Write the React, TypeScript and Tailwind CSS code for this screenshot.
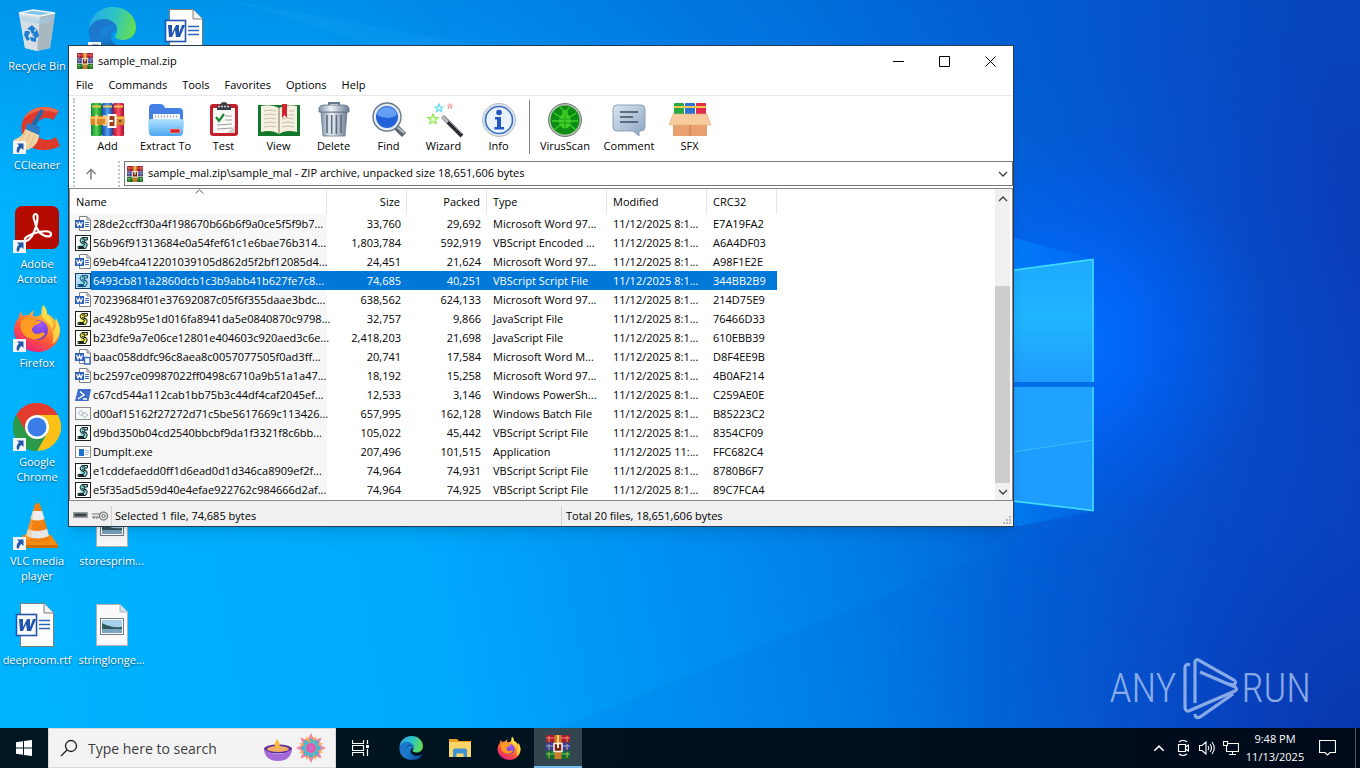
import React from "react";

const UI = "font-['Open_Sans','Noto_Sans',sans-serif]";

/* ---------- wallpaper ---------- */

function Wallpaper() {
  return (
    <svg className="absolute inset-0 h-full w-full" viewBox="0 0 1360 728" preserveAspectRatio="xMidYMid slice" aria-hidden="true">
      <defs>
        <linearGradient id="wpBase" x1="0" y1="500" x2="1360" y2="250" gradientUnits="userSpaceOnUse">
          <stop offset="0" stopColor="#00b3ff" />
          <stop offset="0.28" stopColor="#00aafc" />
          <stop offset="0.5" stopColor="#008cf0" />
          <stop offset="0.68" stopColor="#0070e0" />
          <stop offset="0.85" stopColor="#0553d2" />
          <stop offset="1" stopColor="#0a3eb8" />
        </linearGradient>
        <linearGradient id="wpTop" x1="0" y1="0" x2="0" y2="200" gradientUnits="userSpaceOnUse">
          <stop offset="0" stopColor="#0058c0" stopOpacity="0.3" />
          <stop offset="1" stopColor="#0058c0" stopOpacity="0" />
        </linearGradient>
        <radialGradient id="wpGlow" cx="1070" cy="340" r="200" gradientUnits="userSpaceOnUse">
          <stop offset="0" stopColor="#0070ff" />
          <stop offset="0.35" stopColor="#0068ff" stopOpacity="0.75" />
          <stop offset="1" stopColor="#0060f0" stopOpacity="0" />
        </radialGradient>
        <radialGradient id="wpCorner" cx="1360" cy="728" r="480" gradientUnits="userSpaceOnUse">
          <stop offset="0" stopColor="#0836ac" />
          <stop offset="0.4" stopColor="#0840bc" stopOpacity="0.6" />
          <stop offset="1" stopColor="#0848c8" stopOpacity="0" />
        </radialGradient>
        <linearGradient id="paneA" x1="0" y1="260" x2="0" y2="382" gradientUnits="userSpaceOnUse">
          <stop offset="0" stopColor="#1eaaff" />
          <stop offset="0.5" stopColor="#20b4ff" />
          <stop offset="1" stopColor="#1e9cff" />
        </linearGradient>
        <linearGradient id="beam" x1="1093" y1="0" x2="1000" y2="0" gradientUnits="userSpaceOnUse">
          <stop offset="0" stopColor="#0080ff" stopOpacity="0.2" />
          <stop offset="1" stopColor="#0090ff" stopOpacity="0.6" />
        </linearGradient>
      </defs>
      <rect width="1360" height="728" fill="url(#wpBase)" />
      <rect width="1360" height="200" fill="url(#wpTop)" />
      <rect width="1360" height="728" fill="url(#wpCorner)" />
      <path d="M230 0 420 60H560Z" fill="#30b8ff" opacity="0.12" />
      <rect x="800" y="100" width="560" height="560" fill="url(#wpGlow)" />
      <path d="M1093 259 1000 234V275ZM1093 511 1000 498V526H1020Z" fill="url(#beam)" />
      <path d="M1093 511 560 728H1000L1180 560Z" fill="#005cd8" opacity="0.1" />
      <path d="M1000 272 1093 259V382H1000Z" fill="url(#paneA)" />
      <path d="M1000 387H1093V511L1000 500Z" fill="#1e9cff" />
      <path d="M1000 387H1093V440L1000 454Z" fill="#20a8ff" opacity="0.6" />
      <path d="M1000 382H1093V387H1000Z" fill="#0070e8" />
      <path d="M1000 272 1093 259.500V382M1093 387V510.500L1000 499.500" fill="none" stroke="#3fdcff" strokeWidth="1.600" />
      <path d="M1000 454 1093 440" stroke="#34c0ff" strokeWidth="1" />
    </svg>
  );
}

/* ---------- application icons ---------- */

function EdgeIcon({ className }: { className: string }) {
  return (
    <svg className={className} viewBox="0 0 48 48" aria-hidden="true">
      <defs>
        <linearGradient id="edgeTop" x1="0" y1="0.3" x2="1" y2="0.5">
          <stop offset="0" stopColor="#28a8e8" />
          <stop offset="0.5" stopColor="#2cc4c8" />
          <stop offset="1" stopColor="#66dd50" />
        </linearGradient>
        <linearGradient id="edgeLow" x1="0" y1="0" x2="1" y2="1">
          <stop offset="0" stopColor="#1b8fe0" />
          <stop offset="1" stopColor="#0c4a9c" />
        </linearGradient>
      </defs>
      <path d="M1 22C2 8 13 0 25 0c14 0 23 10 23 20 0 8-6 13-13 13-5 0-8-2-8-4 0-1 2-2 2-6 0-6-6-10-13-10C9 13 3 17 1 22Z" fill="url(#edgeTop)" />
      <path d="M1 22C3 16 9 12 16 12c7 0 13 4 13 11-2-4-6-6-10-4-5 3-7 9-5 15 2 7 8 11 14 13C12 50-1 38 1 22Z" fill="#1b78cc" />
      <path d="M29 23c-2-4-7-5-10-3-5 3-8 10-5 17 4 9 14 12 22 10 4-2 7-5 9-8 1-1 0-2-2-1-8 4-19 1-20-8 0-3 2-5 4-6Z" fill="url(#edgeLow)" />
    </svg>
  );
}

function FirefoxIcon({ className }: { className: string }) {
  return (
    <svg className={className} viewBox="0 0 48 48" aria-hidden="true">
      <defs>
        <linearGradient id="ffBody" x1="0.8" y1="0" x2="0.2" y2="1">
          <stop offset="0" stopColor="#fff44f" />
          <stop offset="0.3" stopColor="#ffa833" />
          <stop offset="0.6" stopColor="#ff5a36" />
          <stop offset="1" stopColor="#e31587" />
        </linearGradient>
        <radialGradient id="ffGlobe" cx="0.6" cy="0.2" r="0.9">
          <stop offset="0" stopColor="#a05cff" />
          <stop offset="1" stopColor="#5b2fc4" />
        </radialGradient>
      </defs>
      <path d="M30 1c3 3 4 6 4 9 4 1 7 5 8 7 1-1 1-2 0-4 4 5 5 10 5 14 0 12-10 21-22 21S2 39 1 27c0-7 3-11 5-14 0-2 1-4 2-6 0 2 1 4 2 5 2-1 4-1 6-1 2-3 4-4 6-5-2 2-2 4-2 6 4 1 7 0 9-3 2-2 2-5 1-8Z" fill="url(#ffBody)" />
      <circle cx="25" cy="26" r="10" fill="url(#ffGlobe)" />
      <path d="M8 17c5-5 11-4 13-1 2 1 5 1 7 1 0 2-4 4-6 4-1 2-3 2-3 5 1 4 5 5 9 3 2-1 4 0 4 1-3 5-10 7-16 4-6-2-10-9-8-17Z" fill="#ff9a22" />
      <path d="M30 1c3 3 4 6 4 9 6 5 7 12 5 18 5-3 5-10 3-14 3 4 5 9 5 13-1 5-3 10-8 13 3-8 1-17-5-22-6-5-7-11-4-17Z" fill="#ffe24a" opacity="0.85" />
    </svg>
  );
}

function ChromeIcon({ className }: { className: string }) {
  return (
    <svg className={className} viewBox="0 0 48 48" aria-hidden="true">
      <path d="M24 24 3.200 12A24 24 0 0 1 44.800 12Z" fill="#ea4335" />
      <path d="M3.200 12A24 24 0 0 0 24 48L34.400 30 24 24Z" fill="#34a853" />
      <path d="M44.800 12A24 24 0 0 1 24 48L34.400 30 24 12Z" fill="#fbc116" />
      <path d="M3.200 12 13.600 30 24 12H44.800A24 24 0 0 0 3.200 12Z" fill="#e33b2e" />
      <path d="M3.200 12 13.600 30A12 12 0 0 0 34 30L24 48A24 24 0 0 1 3.200 12Z" fill="#2a9a48" />
      <circle cx="24" cy="24" r="12" fill="#fff" />
      <circle cx="24" cy="24" r="9.500" fill="#3a7de8" />
    </svg>
  );
}

function RecycleIcon() {
  return (
    <svg className="h-12 w-12" viewBox="0 0 48 48" aria-hidden="true">
      <path d="M6 6 20 3 42 6 37 41 24 44 12 41Z" fill="#d5dde3" />
      <path d="M6 6 27 9 24 44 12 41Z" fill="#d8dfe4" />
      <path d="M27 9 42 6 37 41 24 44Z" fill="#a9b7c0" />
      <path d="M6 6 20 3 42 6 27 9Z" fill="#82c2e8" stroke="#eef4f7" strokeWidth="1.500" />
      <path d="M8 9 27 12 40 9 39 14 27 17 9 14Z" fill="#9fd0ec" opacity="0.5" />
      <path d="M14 22l5-4 4 4-2 1 1 3-3 1-2-4ZM24 22l2 7-4 3-1-3-2 0 3-4ZM12 24l4 0 1 2-2 3 2 3-3 2-3-6ZM17 30l6 1 0 4-5-1Z" fill="#1c7fd4" />
    </svg>
  );
}

function CCleanerIcon() {
  return (
    <svg className="h-12 w-12" viewBox="0 0 48 48" aria-hidden="true">
      <path d="M46 5C34-2 16 0 10 14c-4 10 0 24 10 28 9 4 20 2 27-2l-4-9c-6 4-14 4-18-1-4-5-3-13 2-16 5-3 10-2 13 0Z" fill="#dd3a2c" />
      <path d="M46 5C34-2 16 0 10 14c8-9 20-12 33-7Z" fill="#f06a4c" />
      <path d="M28 3 31 5 22 21 18 18Z" fill="#2468ac" />
      <path d="M14 17 27 21 26 30 12 25Z" fill="#2d7cc4" />
      <path d="M12 23 26 29C26 38 18 43 14 44L0 34C6 32 11 29 12 23Z" fill="#f1d5a4" />
      <path d="M13 26 6 36M17 28 11 40M22 29 16 42" stroke="#dfbb84" strokeWidth="1" />
    </svg>
  );
}

function AcrobatIcon() {
  return (
    <svg className="h-12 w-12" viewBox="0 0 48 48" aria-hidden="true">
      <rect x="2" y="1" width="44" height="43" rx="7" fill="#b30b00" />
      <path d="M23 9c-3 0-3 4-1 8 1 5 4 11 8 13 4 2 8 2 8-1 0-4-9-3-16-1-6 2-11 5-10 7 2 3 7-3 9-8 3-6 5-18 2-18Z" fill="none" stroke="#fff" strokeWidth="2.200" />
    </svg>
  );
}

function VlcIcon() {
  return (
    <svg className="h-12 w-12" viewBox="0 0 48 48" aria-hidden="true">
      <path d="M10 33H38L45 43V46H4V43Z" fill="#f28a10" />
      <path d="M4 43H45V46H4Z" fill="#d06c00" />
      <path d="M22 2Q24.500 0 27 2L37 37Q24.500 43 12 37Z" fill="#f08010" />
      <path d="M19.800 9H29.200L31.500 17Q24.500 20 17.500 17Z" fill="#ededed" />
      <path d="M15 27Q24.500 31 34 27L36 34Q24.500 39 13 34Z" fill="#e6e6e6" />
      <path d="M22 2Q19 20 18 38L12 37Z" fill="#ffb45a" opacity="0.4" />
    </svg>
  );
}

function WordDocIcon() {
  return (
    <svg className="h-12 w-12" viewBox="0 0 48 48" aria-hidden="true">
      <path d="M7.500 2.500H31L40.500 12V45.500H7.500Z" fill="#fff" stroke="#7c7c7c" />
      <path d="M31 2.500V12H40.500" fill="#f0f0f0" stroke="#7c7c7c" />
      <path d="M26 19.500H37M26 23.500H37M26 27.500H37" stroke="#2a64b8" strokeWidth="1.300" />
      <rect x="3.500" y="13.500" width="20" height="21" fill="#fff" stroke="#2055b0" strokeWidth="1.600" />
      <path d="M6 18h4l0 8 4-8h3l0 8 3-8h3l-5 12h-4l-1-7-3 7H7Z" fill="#2055b0" />
    </svg>
  );
}

function PictureDocIcon() {
  return (
    <svg className="h-12 w-12" viewBox="0 0 48 48" aria-hidden="true">
      <path d="M8.500 3.500H32L39.500 11V44.500H8.500Z" fill="#fafafa" stroke="#a8b2b8" />
      <path d="M32 3.500V11H39.500" fill="#cfe2ee" stroke="#a8b2b8" />
      <rect x="12.500" y="17.500" width="23" height="16" fill="#fff" stroke="#6c7c88" />
      <rect x="14" y="19" width="20" height="13" fill="#a6d0f0" />
      <path d="M14 22Q22 27 34 26V29H14Z" fill="#31585e" />
      <path d="M14 28H34V32H14Z" fill="#7aa4c0" />
    </svg>
  );
}

function ShortcutBadge() {
  return (
    <svg className="absolute bottom-0 left-0 h-[13px] w-[13px]" viewBox="0 0 13 13" aria-hidden="true">
      <rect width="13" height="13" fill="#f4f4f4" />
      <path d="M4 2.500H10.500V9L8.500 7C7 8 6 9 6 11.500H4C3 8 4.500 6 6 4.500Z" fill="#1f5aa8" />
    </svg>
  );
}

/* Stacked books tied with a belt; used at 16px and 24px. */
function RarIcon({ className }: { className: string }) {
  return (
    <svg className={className} viewBox="0 0 24 24" aria-hidden="true">
      <rect x="0" y="0" width="24" height="7.500" rx="1" fill="#a81c34" />
      <rect x="0" y="2" width="24" height="2" fill="#dc4858" />
      <rect x="0" y="8" width="24" height="7.500" rx="1" fill="#34409c" />
      <rect x="0" y="10" width="24" height="2" fill="#5c78d0" />
      <rect x="0" y="16" width="24" height="8" rx="1" fill="#10702c" />
      <rect x="0" y="18" width="24" height="2" fill="#38a44c" />
      <path d="M3 1V7M3 9V15M3 17V23M21 1V7M21 9V15M21 17V23" stroke="#d8a850" strokeWidth="1" />
      <rect x="8.500" y="0" width="7" height="24" fill="#cc7c28" />
      <path d="M12 0V8" stroke="#ffc868" strokeWidth="2" />
      <rect x="8" y="8.500" width="8" height="8" fill="#7a2010" stroke="#f4ead8" strokeWidth="1.600" />
      <path d="M12 8V13" stroke="#fff" strokeWidth="1.800" />
    </svg>
  );
}

/* ---------- toolbar icons ---------- */

const svgBox = "h-9 w-[46px]";

function AddIcon() {
  return (
    <svg className={svgBox} viewBox="0 0 46 36" aria-hidden="true">
      <defs>
        <linearGradient id="bookG" x1="0" x2="1"><stop offset="0" stopColor="#0c8a30" /><stop offset="0.5" stopColor="#52d050" /><stop offset="1" stopColor="#0c7a28" /></linearGradient>
        <linearGradient id="bookB" x1="0" x2="1"><stop offset="0" stopColor="#1848b0" /><stop offset="0.5" stopColor="#50a0f0" /><stop offset="1" stopColor="#1c3c98" /></linearGradient>
        <linearGradient id="bookR" x1="0" x2="1"><stop offset="0" stopColor="#b01038" /><stop offset="0.5" stopColor="#ff5068" /><stop offset="1" stopColor="#a80c30" /></linearGradient>
      </defs>
      <rect x="6" y="1" width="11" height="33" rx="1.500" fill="url(#bookG)" />
      <rect x="17" y="1" width="11" height="33" rx="1.500" fill="url(#bookB)" />
      <rect x="28" y="1" width="11" height="33" rx="1.500" fill="url(#bookR)" />
      <path d="M7 4.500H16M18 4.500H27M29 4.500H38" stroke="#f2c84c" strokeWidth="2" />
      <rect x="5.500" y="14" width="34" height="9" rx="1" fill="#d8882a" />
      <path d="M6 16H39" stroke="#ffc860" strokeWidth="1.500" />
      <path d="M13 14H11V23H13M18 14H21V23H18" stroke="#ffe0a0" strokeWidth="1.500" fill="none" />
      <rect x="23.500" y="13" width="7" height="12" fill="#a83c18" stroke="#fff" strokeWidth="2" />
      <path d="M23 19H28" stroke="#fff" strokeWidth="2" />
      <circle cx="35" cy="19" r="1.200" fill="#703808" />
    </svg>
  );
}

function ExtractIcon() {
  return (
    <svg className={svgBox} viewBox="0 0 46 36" aria-hidden="true">
      <defs>
        <linearGradient id="foldF" x1="0" y1="0" x2="0" y2="1"><stop offset="0" stopColor="#b4e4ff" /><stop offset="1" stopColor="#4ca8f0" /></linearGradient>
      </defs>
      <path d="M6 6Q6 2 10 2H17Q21 2 22 6H36Q40 6 40 10V26H6Z" fill="#4480e4" />
      <path d="M10 12H37V24H10Z" fill="#f4f6f8" />
      <path d="M12 14.500H36" stroke="#9aa4ae" strokeWidth="2" strokeDasharray="1 2" />
      <path d="M5 20Q5 17 9 17H37Q41 17 41 20L40 31Q40 34 36 34H10Q6 34 6 31Z" fill="url(#foldF)" />
      <rect x="27" y="27" width="10" height="4" rx="1" fill="#d8282c" stroke="#f8b0b0" strokeWidth="0.600" />
    </svg>
  );
}

function TestIcon() {
  return (
    <svg className={svgBox} viewBox="0 0 46 36" aria-hidden="true">
      <rect x="9" y="2" width="28" height="32" rx="3" fill="#c4202c" />
      <path d="M12 6H34V31H12Z" fill="#f8f8f6" />
      <path d="M16 3H19Q20 0 23 0T27 3H30V8H16Z" fill="#3c4044" />
      <path d="M17 4.500H29" stroke="#d0d4d8" strokeWidth="1.500" strokeDasharray="2 1" />
      <path d="M15 15L18 19 23 12" stroke="#1c8a38" strokeWidth="2.200" fill="none" />
      <path d="M24 14H31M24 18H31M16 23L31 22M16 27L31 26" stroke="#a0a0a0" strokeWidth="1" />
      <path d="M34 24V31H26Z" fill="#d4d0cc" />
    </svg>
  );
}

function ViewIcon() {
  return (
    <svg className={svgBox} viewBox="0 0 46 36" aria-hidden="true">
      <path d="M2 3H44V34H2Z" fill="#14782c" />
      <path d="M5 4Q16 2 23 6Q30 2 41 4V30Q30 27 23 32Q16 27 5 30Z" fill="#f6f0e0" />
      <path d="M23 6V32" stroke="#a89c80" strokeWidth="1.500" />
      <path d="M8 9Q14 7 20 9M8 13Q14 11 20 13M8 17Q14 15 20 17M8 21Q14 19 20 21M8 25Q14 23 20 25M26 17Q32 15 38 17M26 21Q32 19 38 21M26 25Q32 23 38 25M33 13H38M33 9H38" stroke="#c4beb0" strokeWidth="1" fill="none" />
      <path d="M26 2H31V16L28.500 13 26 16Z" fill="#d42430" />
    </svg>
  );
}

function DeleteIcon() {
  return (
    <svg className={svgBox} viewBox="0 0 46 36" aria-hidden="true">
      <defs>
        <linearGradient id="bin" x1="0" x2="1"><stop offset="0" stopColor="#8494a6" /><stop offset="0.4" stopColor="#eef3f8" /><stop offset="1" stopColor="#6c7c90" /></linearGradient>
      </defs>
      <path d="M18 3V1H28V3" stroke="#64748a" strokeWidth="1.800" fill="none" />
      <path d="M10 10H36L34 34H12Z" fill="url(#bin)" stroke="#6a7a8c" strokeWidth="0.800" />
      <path d="M16 13V31M20.700 13V32M25.400 13V32M30 13V31" stroke="#5a6a80" strokeWidth="1.600" />
      <path d="M8 6Q9 3 13 3H33Q37 3 38 6V10H8Z" fill="url(#bin)" stroke="#5a6a7c" strokeWidth="0.800" />
    </svg>
  );
}

function FindIcon() {
  return (
    <svg className={svgBox} viewBox="0 0 46 36" aria-hidden="true">
      <path d="M30 25 38 33" stroke="#5c6470" strokeWidth="6" />
      <path d="M31 25 38 31" stroke="#b4bcc6" strokeWidth="2" />
      <circle cx="21" cy="15" r="14" fill="#e4eaf0" stroke="#68788c" strokeWidth="1.400" />
      <circle cx="21" cy="15" r="11" fill="#2262d8" />
      <path d="M11 13Q13 5 21 5T31 13Q22 19 11 13Z" fill="#78b4ff" opacity="0.75" />
    </svg>
  );
}

const star = "M0-5 1.500-1.600 5-1.300 2.400 1 3.200 4.500 0 2.700-3.200 4.500-2.400 1-5-1.300-1.500-1.600Z";

function WizardIcon() {
  return (
    <svg className={svgBox} viewBox="0 0 46 36" aria-hidden="true">
      <path d="M22 15 41 34" stroke="#2c2c30" strokeWidth="4" />
      <path d="M21 14 27 20" stroke="#b8bcc2" strokeWidth="4" />
      <path d="M23 14 41 32" stroke="#8c9098" strokeWidth="1" />
      <path d={star} transform="translate(12 17)" fill="#e4ffc8" stroke="#90e850" strokeWidth="1.200" />
      <path d={star} transform="translate(18 6) scale(0.800)" fill="#d4f8ff" stroke="#64d8f0" strokeWidth="1.400" />
      <path d={star} transform="translate(29 4) scale(0.500)" fill="#ffe4e8" stroke="#f0909c" strokeWidth="1.800" />
    </svg>
  );
}

function InfoIcon() {
  return (
    <svg className={svgBox} viewBox="0 0 46 36" aria-hidden="true">
      <circle cx="23" cy="18" r="16.500" fill="#dfe4ea" stroke="#a8b0ba" strokeWidth="0.800" />
      <circle cx="23" cy="18" r="13.500" fill="#eaf2fc" stroke="#3c70c4" strokeWidth="1.600" />
      <circle cx="23" cy="10.500" r="2.800" fill="#2458c0" />
      <path d="M19 15H25V25H28V27.500H18.500V25H21V17.500H19Z" fill="#2458c0" />
    </svg>
  );
}

function VirusIcon() {
  return (
    <svg className={svgBox} viewBox="0 0 46 36" aria-hidden="true">
      <circle cx="23" cy="18" r="16.500" fill="#b8c0b4" stroke="#506050" strokeWidth="0.800" />
      <circle cx="23" cy="18" r="14.500" fill="#0c8c14" />
      <ellipse cx="23" cy="19" rx="6" ry="7.500" fill="#40d028" />
      <circle cx="23" cy="10.500" r="3" fill="#38c422" />
      <path d="M18 15 12 11M17 19H10M18 23 12 28M28 15 34 11M29 19H36M28 23 34 28M21 8 18 5M25 8 28 5" stroke="#40d028" strokeWidth="1.300" />
      <path d="M23 13V26M18 17H28M18 21H28" stroke="#1c9c18" strokeWidth="0.900" />
    </svg>
  );
}

function CommentIcon() {
  return (
    <svg className={svgBox} viewBox="0 0 46 36" aria-hidden="true">
      <defs>
        <linearGradient id="bub" x1="0" y1="0" x2="1" y2="1"><stop offset="0" stopColor="#dae6f2" /><stop offset="1" stopColor="#8ca4c0" /></linearGradient>
      </defs>
      <path d="M11 3H35Q39 3 39 7V25Q39 29 35 29H33V34L27 29H11Q7 29 7 25V7Q7 3 11 3Z" fill="url(#bub)" stroke="#8ca0b8" />
      <path d="M14 10H32M14 15H27M14 20H32" stroke="#3c4c60" strokeWidth="1.600" />
    </svg>
  );
}

function SfxIcon() {
  return (
    <svg className={svgBox} viewBox="0 0 46 36" aria-hidden="true">
      <rect x="7" y="1" width="10" height="14" rx="1" fill="#28a844" />
      <rect x="18" y="1" width="10" height="14" rx="1" fill="#2c74d4" />
      <rect x="29" y="1" width="10" height="14" rx="1" fill="#e02c4c" />
      <path d="M7 5H39" stroke="#f2c84c" strokeWidth="2" />
      <path d="M6 17H40V34H6Z" fill="#e8a070" />
      <path d="M6 12H40L44 23H2Z" fill="#f8cc9c" stroke="#e0b084" strokeWidth="0.600" />
      <path d="M23 23V34" stroke="#c87c50" />
    </svg>
  );
}

const toolsA = [
  { label: "Add", icon: <AddIcon />, width: "w-[55px]" },
  { label: "Extract To", icon: <ExtractIcon />, width: "w-[61px]" },
  { label: "Test", icon: <TestIcon />, width: "w-[55px]" },
  { label: "View", icon: <ViewIcon />, width: "w-[55px]" },
  { label: "Delete", icon: <DeleteIcon />, width: "w-[55px]" },
  { label: "Find", icon: <FindIcon />, width: "w-[55px]" },
  { label: "Wizard", icon: <WizardIcon />, width: "w-[55px]" },
  { label: "Info", icon: <InfoIcon />, width: "w-[55px]" },
];
const toolsB = [
  { label: "VirusScan", icon: <VirusIcon />, width: "w-[62px]" },
  { label: "Comment", icon: <CommentIcon />, width: "w-[66px]" },
  { label: "SFX", icon: <SfxIcon />, width: "w-[55px]" },
];

function ToolButton({ label, icon, width }: { label: string; icon: React.ReactNode; width: string }) {
  return (
    <button type="button" className={`flex flex-col items-center whitespace-nowrap pt-1 leading-4 ${width}`}>
      {icon}
      {label}
    </button>
  );
}

/* ---------- file list ---------- */

type Kind = "word" | "vbs" | "js" | "docm" | "ps" | "bat" | "exe";

function FileIcon({ kind, selected }: { kind: Kind; selected?: boolean }) {
  const cls = "h-4 w-4 shrink-0";
  if (kind === "word" || kind === "docm")
    return (
      <svg className={cls} viewBox="0 0 16 16" aria-hidden="true">
        <path d="M4.500 0.500H12L15.500 4V14.500H4.500Z" fill="#fff" stroke="#808080" />
        <path d="M12 0.500V4H15.500" fill="none" stroke="#808080" />
        <rect x="0" y="4" width="9" height="8" fill="#2b5fb8" />
        <path d="M1.500 6 3 10 4.500 6.500 6 10 7.500 6" stroke="#fff" strokeWidth="1.200" fill="none" />
        {kind === "word" ? (
          <path d="M10 6.500H14M10 8.500H14M10 10.500H14" stroke="#3a6cc0" />
        ) : (
          <path d="M9.500 8.500H15V15H9.500Z" fill="#fff" stroke="#3a6cc0" strokeWidth="1.400" />
        )}
      </svg>
    );
  if (kind === "vbs" || kind === "js")
    return (
      <svg className={cls} viewBox="0 0 16 16" aria-hidden="true">
        <rect x="0.500" y="0.500" width="15" height="15" fill={selected ? "#b8dcf8" : "#fff"} stroke={selected ? "#10406c" : "#202020"} />
        <path d="M6 2H13V4L11 6 12.500 9 11 14H3V11L6 10 4.500 6Z" fill={kind === "vbs" ? "#8cd8d8" : "#f0e840"} />
        <path d="M12.500 2.500H7L5 5L6 7.500 9.500 9 8.500 11.500 3 11.500V13.500H10.500L12 11V8.500L9 6.500 9.500 5H12.500ZM7 4H10M7 6.500 11 8M4 12.500H9" fill="none" stroke={selected ? "#0c5088" : "#182428"} />
      </svg>
    );
  if (kind === "ps")
    return (
      <svg className={cls} viewBox="0 0 16 16" aria-hidden="true">
        <path d="M3 2H16L13.500 14H0Z" fill="#3c6cc8" />
        <path d="M5 4.500 9 8 3 12M8 12H12" stroke="#fff" strokeWidth="1.500" fill="none" />
      </svg>
    );
  if (kind === "bat")
    return (
      <svg className={cls} viewBox="0 0 16 16" aria-hidden="true">
        <rect x="0.500" y="1.500" width="15" height="12" fill="#f4f8fa" stroke="#888" />
        <circle cx="6" cy="7" r="2.200" fill="none" stroke="#8ca0ac" strokeDasharray="1.500 0.700" />
        <circle cx="10" cy="9" r="2.200" fill="none" stroke="#8ca0ac" strokeDasharray="1.500 0.700" />
      </svg>
    );
  return (
    <svg className={cls} viewBox="0 0 16 16" aria-hidden="true">
      <rect x="0.500" y="2.500" width="15" height="11" fill="#fff" stroke="#888" />
      <rect x="4" y="5" width="5" height="7" fill="#1c70d0" />
      <path d="M10 6.500H14M10 8.500H14M10 10.500H13" stroke="#9cb8d8" />
    </svg>
  );
}

const files: { kind: Kind; name: string; size: string; packed: string; type: string; modified: string; crc: string }[] = [
  { kind: "word", name: "28de2ccff30a4f198670b66b6f9a0ce5f5f9b7...", size: "33,760", packed: "29,692", type: "Microsoft Word 97...", modified: "11/12/2025 8:1...", crc: "E7A19FA2" },
  { kind: "vbs", name: "56b96f91313684e0a54fef61c1e6bae76b314...", size: "1,803,784", packed: "592,919", type: "VBScript Encoded ...", modified: "11/12/2025 8:1...", crc: "A6A4DF03" },
  { kind: "word", name: "69eb4fca412201039105d862d5f2bf12085d4...", size: "24,451", packed: "21,624", type: "Microsoft Word 97...", modified: "11/12/2025 8:1...", crc: "A98F1E2E" },
  { kind: "vbs", name: "6493cb811a2860dcb1c3b9abb41b627fe7c8...", size: "74,685", packed: "40,251", type: "VBScript Script File", modified: "11/12/2025 8:1...", crc: "344BB2B9" },
  { kind: "word", name: "70239684f01e37692087c05f6f355daae3bdc...", size: "638,562", packed: "624,133", type: "Microsoft Word 97...", modified: "11/12/2025 8:1...", crc: "214D75E9" },
  { kind: "js", name: "ac4928b95e1d016fa8941da5e0840870c9798...", size: "32,757", packed: "9,866", type: "JavaScript File", modified: "11/12/2025 8:1...", crc: "76466D33" },
  { kind: "js", name: "b23dfe9a7e06ce12801e404603c920aed3c6e...", size: "2,418,203", packed: "21,698", type: "JavaScript File", modified: "11/12/2025 8:1...", crc: "610EBB39" },
  { kind: "docm", name: "baac058ddfc96c8aea8c0057077505f0ad3ff...", size: "20,741", packed: "17,584", type: "Microsoft Word M...", modified: "11/12/2025 8:1...", crc: "D8F4EE9B" },
  { kind: "word", name: "bc2597ce09987022ff0498c6710a9b51a1a47...", size: "18,192", packed: "15,258", type: "Microsoft Word 97...", modified: "11/12/2025 8:1...", crc: "4B0AF214" },
  { kind: "ps", name: "c67cd544a112cab1bb75b3c44df4caf2045ef...", size: "12,533", packed: "3,146", type: "Windows PowerSh...", modified: "11/12/2025 8:1...", crc: "C259AE0E" },
  { kind: "bat", name: "d00af15162f27272d71c5be5617669c113426...", size: "657,995", packed: "162,128", type: "Windows Batch File", modified: "11/12/2025 8:1...", crc: "B85223C2" },
  { kind: "vbs", name: "d9bd350b04cd2540bbcbf9da1f3321f8c6bb...", size: "105,022", packed: "45,442", type: "VBScript Script File", modified: "11/12/2025 8:1...", crc: "8354CF09" },
  { kind: "exe", name: "DumpIt.exe", size: "207,496", packed: "101,515", type: "Application", modified: "11/12/2025 11:...", crc: "FFC682C4" },
  { kind: "vbs", name: "e1cddefaedd0ff1d6ead0d1d346ca8909ef2f...", size: "74,964", packed: "74,931", type: "VBScript Script File", modified: "11/12/2025 8:1...", crc: "8780B6F7" },
  { kind: "vbs", name: "e5f35ad5d59d40e4efae922762c984666d2af...", size: "74,964", packed: "74,925", type: "VBScript Script File", modified: "11/12/2025 8:1...", crc: "89C7FCA4" },
];

function FileTable() {
  const th = "border-r border-[#e5e5e5] px-1.5 font-normal";
  const td = "whitespace-nowrap px-1.5 py-0";
  return (
    <table className="w-[707px] table-fixed border-separate border-spacing-0 leading-[19px]">
      <colgroup>
        <col className="w-[257px]" />
        <col className="w-20" />
        <col className="w-20" />
        <col className="w-[120px]" />
        <col className="w-[100px]" />
        <col className="w-[70px]" />
      </colgroup>
      <thead>
        <tr className="h-[25px] text-left">
          <th scope="col" className={`relative ${th}`}>
            Name
            <svg className="absolute left-[125px] top-0 h-[5px] w-[9px]" viewBox="0 0 9 5" aria-hidden="true">
              <path d="M0.500 4.500 4.500 0.700 8.500 4.500" fill="none" stroke="#606060" />
            </svg>
          </th>
          <th scope="col" className={`text-right ${th}`}>Size</th>
          <th scope="col" className={`text-right ${th}`}>Packed</th>
          <th scope="col" className={th}>Type</th>
          <th scope="col" className={th}>Modified</th>
          <th scope="col" className={th}>CRC32</th>
        </tr>
      </thead>
      <tbody>
        {files.map((f) => {
          const on = f.size === "74,685";
          const hl = on ? "bg-[#0078d7] text-white" : "";
          return (
            <tr key={f.name} className="h-[19px]">
              <td className="bg-[#f7f7f7] p-0">
                <div className="flex h-[19px] items-center pl-[5px]">
                  <FileIcon kind={f.kind} selected={on} />
                  <span className={`flex-1 whitespace-nowrap pl-0.5 ${hl}`}>{f.name}</span>
                </div>
              </td>
              <td className={`text-right ${td} ${hl}`}>{f.size}</td>
              <td className={`text-right ${td} ${hl}`}>{f.packed}</td>
              <td className={`${td} ${hl}`}>{f.type}</td>
              <td className={`${td} ${hl}`}>{f.modified}</td>
              <td className={`${td} ${hl}`}>{f.crc}</td>
            </tr>
          );
        })}
      </tbody>
    </table>
  );
}

function Chevron({ up, className }: { up?: boolean; className: string }) {
  return (
    <svg className={className} viewBox="0 0 10 6" aria-hidden="true">
      <path d={up ? "M1 5 5 1 9 5" : "M1 1 5 5 9 1"} fill="none" stroke="currentColor" strokeWidth="1.300" />
    </svg>
  );
}

function ArchiveWindow() {
  const grip = "border-l-2 border-dotted border-[#b4c8bc]";
  return (
    <section aria-label="sample_mal.zip" className="absolute left-[68px] top-[45px] flex w-[946px] flex-col border border-[#2a3a48] bg-white text-[11px] text-black shadow-lg">
      <header className="flex h-[30px] items-center pl-2">
        <RarIcon className="h-4 w-4" />
        <h1 className="flex-1 pl-[5px]">sample_mal.zip</h1>
        <button type="button" aria-label="Minimize" className="flex h-full w-[46px] items-center justify-center">
          <svg className="h-[11px] w-[11px]" viewBox="0 0 11 11"><path d="M0 5.500H11" stroke="#000" /></svg>
        </button>
        <button type="button" aria-label="Maximize" className="flex h-full w-[46px] items-center justify-center">
          <svg className="h-[11px] w-[11px]" viewBox="0 0 11 11"><path d="M0.500 0.500H10.500V10.500H0.500Z" fill="none" stroke="#000" /></svg>
        </button>
        <button type="button" aria-label="Close" className="flex h-full w-[46px] items-center justify-center">
          <svg className="h-[11px] w-[11px]" viewBox="0 0 11 11"><path d="M0.500 0.500 10.500 10.500M10.500 0.500 0.500 10.500" stroke="#000" /></svg>
        </button>
      </header>
      <nav aria-label="Menu" className="flex h-5 items-center gap-[15px] border-b border-[#e8e8e8] pl-[7px]">
        {["File", "Commands", "Tools", "Favorites", "Options", "Help"].map((m) => (
          <button key={m} type="button">{m}</button>
        ))}
      </nav>

      <div className="flex flex-col pl-1 pt-[2px]">
        <div className={`flex flex-col ${grip}`}>
          <div className="flex h-[63px] items-start pl-[5px]">
            {toolsA.map((t) => <ToolButton key={t.label} {...t} />)}
            <div className="ml-[3px] mr-1 mt-0.5 h-[54px] w-px self-start bg-[#808080]" />
            {toolsB.map((t) => <ToolButton key={t.label} {...t} />)}
          </div>
          <div className="flex h-[26px] items-stretch">
            <button type="button" aria-label="Up one level" className="flex w-[43px] items-center pl-[10px]">
              <svg className="h-3 w-3" viewBox="0 0 12 12" aria-hidden="true">
                <path d="M6 11.500V1.500M1.500 6 6 1.500 10.500 6" fill="none" stroke="#8a8a8a" strokeWidth="1.700" />
              </svg>
            </button>
            <div className={`flex flex-1 pl-1 ${grip}`}>
              <div className="relative flex h-[25px] flex-1 items-center border border-[#767676] pl-[2px]">
                <RarIcon className="h-4 w-4 shrink-0" />
                <select aria-label="Current folder" className="h-full flex-1 appearance-none bg-transparent pl-[5px] outline-none">
                  <option>sample_mal.zip\sample_mal - ZIP archive, unpacked size 18,651,606 bytes</option>
                </select>
                <Chevron className="pointer-events-none absolute right-1 h-[6px] w-[10px] text-[#404040]" />
              </div>
            </div>
          </div>
        </div>
      </div>

      <div className="mt-px flex border border-[#828790]">
        <div className="flex-1 pb-px"><FileTable /></div>
        <div className="mr-0.5 flex w-[15px] flex-col items-center bg-[#f0f0f0] text-[#404040]">
          <button type="button" aria-label="Scroll up" className="flex h-5 w-full items-center justify-center"><Chevron up className="h-[6px] w-[10px]" /></button>
          <div className="flex w-full flex-1 flex-col pt-[77px]">
            <div className="w-full flex-1 bg-[#cdcdcd]" />
          </div>
          <button type="button" aria-label="Scroll down" className="flex h-[17px] w-full items-center justify-center"><Chevron className="h-[6px] w-[10px]" /></button>
        </div>
      </div>

      <footer className="relative flex h-[25px] items-center bg-[#f0f0f0] pt-1">
        <div className="flex w-[42px] items-center gap-1 pl-1">
          <svg className="h-3 w-[15px]" viewBox="0 0 15 12" aria-hidden="true">
            <path d="M0 2H15V8H0Z" fill="#9aa0a4" /><path d="M1.500 3.500H13.500V6.500H1.500Z" fill="#3c4448" />
          </svg>
          <svg className="h-3 w-4" viewBox="0 0 16 12" aria-hidden="true">
            <path d="M0 4H9M0 7H8M2 7V9M5 7V9" stroke="#707070" fill="none" />
            <circle cx="11.500" cy="6" r="4" fill="#e4e8e8" stroke="#707070" strokeWidth="1.200" />
            <circle cx="11.500" cy="6" r="1.600" fill="none" stroke="#707070" />
          </svg>
        </div>
        <span className="w-[450px] border-l border-[#d4d4d4] pl-[3px] leading-5">Selected 1 file, 74,685 bytes</span>
        <span className="flex-1 border-l border-[#d4d4d4] pl-1 leading-5">Total 20 files, 18,651,606 bytes</span>
        <svg className="absolute bottom-px right-px h-[9px] w-[9px]" viewBox="0 0 9 9" aria-hidden="true">
          <path d="M6 0h2v2h-2zM6 3h2v2h-2zM3 3h2v2h-2zM6 6h2v2h-2zM3 6h2v2h-2zM0 6h2v2h-2z" fill="#b8b8b8" />
        </svg>
      </footer>
    </section>
  );
}

/* ---------- desktop ---------- */

const shortcuts = [
  { label: "Recycle Bin", icon: <RecycleIcon />, link: false, place: "col-start-1 row-start-1" },
  { label: "CCleaner", icon: <CCleanerIcon />, link: true, place: "col-start-1 row-start-2" },
  { label: "Adobe Acrobat", icon: <AcrobatIcon />, link: true, place: "col-start-1 row-start-3" },
  { label: "Firefox", icon: <FirefoxIcon className="h-12 w-12" />, link: true, place: "col-start-1 row-start-4" },
  { label: "Google Chrome", icon: <ChromeIcon className="h-12 w-12" />, link: true, place: "col-start-1 row-start-5" },
  { label: "VLC media player", icon: <VlcIcon />, link: true, place: "col-start-1 row-start-6" },
  { label: "deeproom.rtf", icon: <WordDocIcon />, link: false, place: "col-start-1 row-start-7" },
  { label: "", icon: <EdgeIcon className="h-12 w-12" />, link: true, place: "col-start-2 row-start-1" },
  { label: "storesprim...", icon: <PictureDocIcon />, link: false, place: "col-start-2 row-start-6" },
  { label: "stringlonge...", icon: <PictureDocIcon />, link: false, place: "col-start-2 row-start-7" },
  { label: "", icon: <WordDocIcon />, link: false, place: "col-start-3 row-start-1" },
];

function Desktop() {
  return (
    <main className="relative flex-1 overflow-hidden bg-[#0090f0]">
      <Wallpaper />
      <div className="absolute left-0 top-0 grid auto-rows-[99px] grid-cols-[74px_75px_73px]">
        {shortcuts.map((s) => (
          <button key={s.place} type="button" className={`flex flex-col items-center gap-[3px] px-1 pt-[7px] text-[11px] leading-[15px] text-white [text-shadow:0_1px_2px_rgba(0,0,0,0.6)] ${s.place}`}>
            <span className="relative">
              {s.icon}
              {s.link && <ShortcutBadge />}
            </span>
            <span>{s.label}</span>
          </button>
        ))}
      </div>
      <div className="absolute bottom-2 right-[49px] flex h-[62px] items-center font-['Roboto_Condensed','Liberation_Sans_Narrow',Roboto,sans-serif] text-[40px] font-light text-[#b4ccf4] opacity-75">
        <span>ANY</span>
        <svg className="ml-[5px] mr-1 h-[62px] w-14" viewBox="0 0 56 62" aria-hidden="true">
          <path d="M8 7Q3 5 3 10V50Q4 55 9 52L53 33Q56 31 53 29L18 14" fill="none" stroke="currentColor" strokeWidth="3.200" />
          <path d="M13 45V4Q14 0 18 3L52 22Q55 24 52 27L47 26M13 56Q13 61 18 59L51 36" fill="none" stroke="currentColor" strokeWidth="3.200" />
        </svg>
        <span>RUN</span>
      </div>
      <ArchiveWindow />
    </main>
  );
}

/* ---------- taskbar ---------- */

function SearchArt() {
  const petals = [0, 45, 90, 135, 180, 225, 270, 315];
  return (
    <svg className="h-8 w-[66px] shrink-0" viewBox="0 0 66 32" aria-hidden="true">
      <ellipse cx="15" cy="17" rx="14" ry="4.500" fill="#5c2c9c" />
      <path d="M1 17Q2 29 15 29T29 17Q22 22 15 22T1 17Z" fill="#a468d8" />
      <ellipse cx="15" cy="17" rx="11" ry="3" fill="#f0b068" />
      <path d="M14 7Q18 12 16 16H13Q10 13 14 7Z" fill="#ffb838" />
      {petals.map((a) => (
        <g key={a} transform={`rotate(${a} 48 16)`}>
          <path d="M48 1 52 9H44Z" fill="#f088a4" />
          <path d="M48 3 51 11H45Z" transform="rotate(22 48 16)" fill="#f8a83c" />
          <circle cx="48" cy="9" r="2.600" fill="#48b4c8" />
        </g>
      ))}
      <circle cx="48" cy="16" r="6.500" fill="#58bcd0" />
      <circle cx="48" cy="16" r="5" fill="#e05ca8" />
      <circle cx="48" cy="16" r="2" fill="#c070e0" />
    </svg>
  );
}

function ExplorerIcon() {
  return (
    <svg className="h-6 w-6" viewBox="0 0 24 24" aria-hidden="true">
      <path d="M1 3H9L11 5H23V21H1Z" fill="#e8a020" />
      <path d="M1 6H23V21H1Z" fill="#fcd668" />
      <path d="M5 14Q5 12.500 7 12.500H17Q19 12.500 19 14V21H15.500V17.500H8.500V21H5Z" fill="#3c94d4" />
    </svg>
  );
}

function Taskbar() {
  const app = "flex h-full w-[49px] items-center justify-center";
  return (
    <footer className="flex h-10 shrink-0 items-stretch bg-gradient-to-r from-[#001722] via-[#00121f] to-[#000a1a] text-white">
      <button type="button" aria-label="Start" className="flex w-12 items-center justify-center">
        <svg className="h-4 w-4" viewBox="0 0 16 16" aria-hidden="true">
          <path d="M0 2.300 7 1.300V7.500H0ZM8 1.100 16 0V7.500H8ZM0 8.500H7V14.700L0 13.700ZM8 8.500H16V16L8 14.900Z" fill="#fff" />
        </svg>
      </button>
      <label className="flex w-[288px] items-center border border-[#d8d8d8] bg-[#f3f3f3] pl-[11px] pr-1.5">
        <svg className="h-[18px] w-[18px] shrink-0" viewBox="0 0 18 18" aria-hidden="true">
          <circle cx="11" cy="7" r="5.500" fill="none" stroke="#1c1c1c" strokeWidth="1.300" />
          <path d="M7 11 1 17" stroke="#1c1c1c" strokeWidth="1.300" />
        </svg>
        <input type="text" aria-label="Search" placeholder="Type here to search" className="w-0 flex-1 bg-transparent pl-[10px] text-[14px] text-black outline-none placeholder:text-[#3c3c3c]" />
        <SearchArt />
      </label>
      <button type="button" aria-label="Task view" className="flex w-12 items-center justify-center">
        <svg className="h-4 w-[17px]" viewBox="0 0 17 16" aria-hidden="true">
          <path d="M0.500 0V3.500H11.500V0M0.500 16V12.500H11.500V16M0.500 5.500H11.500V10.500H0.500ZM15.500 0V4M15.500 9V16" fill="none" stroke="#fff" strokeWidth="1.200" />
          <rect x="14" y="5" width="3" height="3" fill="#fff" />
        </svg>
      </button>
      <button type="button" aria-label="Edge" className="ml-[3px] flex w-12 items-center justify-center"><EdgeIcon className="h-6 w-6" /></button>
      <button type="button" aria-label="File Explorer" className={app}><ExplorerIcon /></button>
      <button type="button" aria-label="Firefox" className={app}><FirefoxIcon className="h-6 w-6" /></button>
      <button type="button" aria-label="WinRAR" className="ml-px flex w-12 items-center justify-center border-b-2 border-[#76b9ed] bg-[#33454f]"><RarIcon className="h-6 w-6" /></button>

      <div className="ml-auto flex items-center">
        <button type="button" aria-label="Show hidden icons" className="flex w-6 justify-center"><Chevron up className="h-[7px] w-3" /></button>
        <button type="button" aria-label="Camera" className="flex w-6 justify-center">
          <svg className="h-4 w-3" viewBox="0 0 12 16" fill="none" stroke="#fff" aria-hidden="true">
            <path d="M2 2Q6-1 10 2M2 14Q6 17 10 14M1.500 4.500H8.500V11.500H1.500ZM8.500 7 11.500 5V11L8.500 9" strokeWidth="1.200" />
          </svg>
        </button>
        <button type="button" aria-label="Volume" className="flex w-6 justify-center">
          <svg className="h-4 w-4" viewBox="0 0 16 16" fill="none" stroke="#fff" aria-hidden="true">
            <path d="M0.500 5.500H3L7 2V14L3 10.500H0.500ZM9 6Q10.500 8 9 10M11 4Q14 8 11 12M13 2Q17.500 8 13 14" strokeWidth="1.100" />
          </svg>
        </button>
        <button type="button" aria-label="Network" className="flex w-6 justify-center">
          <svg className="h-4 w-4" viewBox="0 0 16 16" fill="none" stroke="#fff" aria-hidden="true">
            <path d="M5 3.500H15.500V11.500H3.500V6M0.500 1.500H4.500V5.500H0.500ZM9.500 11.500V14.500M6 14.500H13" strokeWidth="1.100" />
          </svg>
        </button>
        <div className="flex w-16 flex-col items-center text-[11px] leading-[18px]">
          <time>9:48 PM</time>
          <time>11/13/2025</time>
        </div>
        <button type="button" aria-label="Notifications" className="flex w-10 justify-center">
          <svg className="h-4 w-[17px]" viewBox="0 0 17 16" fill="none" stroke="#fff" aria-hidden="true">
            <path d="M0.500 0.500H16.500V12.500H11L8.500 15 6 12.500H0.500Z" strokeWidth="1.200" />
          </svg>
        </button>
        <div className="ml-2 h-10 w-[5px] border-l border-[#4c5560]" />
      </div>
    </footer>
  );
}

export default function App() {
  return (
    <div className={`flex min-h-screen flex-col overflow-hidden ${UI}`}>
      <Desktop />
      <Taskbar />
    </div>
  );
}
